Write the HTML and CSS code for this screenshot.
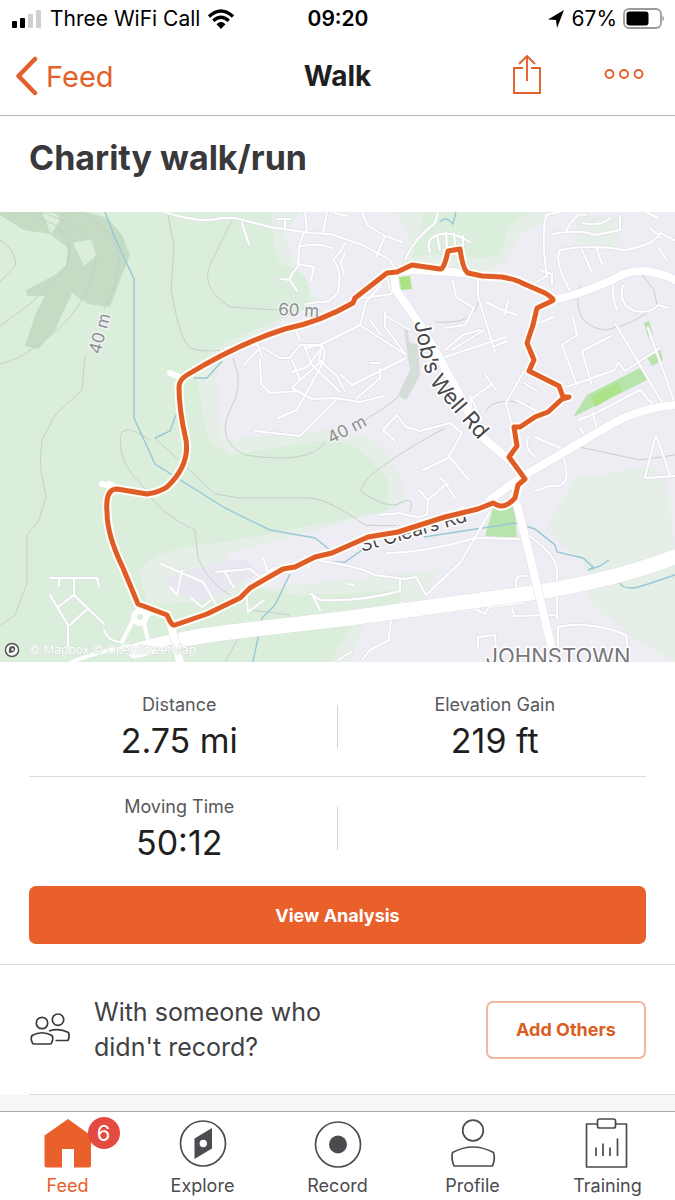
FILE: index.html
```html
<!DOCTYPE html>
<html lang="en">
<head>
<meta charset="utf-8">
<meta name="viewport" content="width=device-width, initial-scale=1">
<title>Walk</title>
<link rel="stylesheet" href="styles.css">
</head>
<body>
<div class="app">
  <div class="status">
    <div class="status-left">
      <svg width="32" height="20" viewBox="0 0 32 20"><rect x="1" y="12" width="5" height="7" rx="1"/><rect x="9" y="9" width="5" height="10" rx="1"/><rect x="17" y="5" width="5" height="14" rx="1" fill="#d0d0d2"/><rect x="25" y="1" width="5" height="18" rx="1" fill="#d0d0d2"/></svg>
      <span>Three WiFi Call</span>
      <svg width="28" height="20" viewBox="0 0 28 20" fill="none" stroke="#000" stroke-width="3.4"><path d="M2 7.500Q14-3.500 26 7.500M6.300 11.800Q14 4.800 21.700 11.800"/><path d="M9.500 15.200Q14 11 18.500 15.200L14 20Z" fill="#000" stroke="none"/></svg>
    </div>
    <strong class="clock">09:20</strong>
    <div class="status-right">
      <svg width="18" height="20" viewBox="0 0 18 20"><path d="M17 1L1 10.500L9 11L10 19Z"/></svg>
      <span class="battery-text">67%</span>
      <svg width="42" height="22" viewBox="0 0 42 22"><rect x="1" y="1" width="37" height="19" rx="5" fill="none" stroke="#9b9b9d" stroke-width="1.800"/><rect x="3.500" y="3.500" width="22" height="14" rx="3"/><path d="M39.500 7.500Q42.500 10.500 39.500 13.500Z" fill="#9b9b9d"/></svg>
    </div>
  </div>

  <header class="nav">
    <a class="back" href="#feed">
      <svg width="24" height="40" viewBox="0 0 24 40" fill="none" stroke="currentColor" stroke-width="4.500" stroke-linecap="round" stroke-linejoin="round"><path d="M20 3L3.500 20L20 37"/></svg>
      <span>Feed</span>
    </a>
    <h1>Walk</h1>
    <div class="nav-actions">
      <button type="button" aria-label="Share"><svg width="30" height="42" viewBox="0 2 30 42" fill="none" stroke="currentColor" stroke-width="1.900"><path d="M11 15H2V40H28V15H19M15 28V3M7 11L15 3L23 11"/></svg></button>
      <button type="button" aria-label="More"><svg width="40" height="14" viewBox="0 0 40 14" fill="none" stroke="currentColor" stroke-width="1.900"><circle cx="5.500" cy="5" r="4"/><circle cx="20" cy="5" r="4"/><circle cx="34.500" cy="5" r="4"/></svg></button>
    </div>
  </header>

  <main>
    <h2 class="title">Charity walk/run</h2>

    <svg class="map" viewBox="0 212 675 450" role="img" aria-label="Route map">
      <defs>
        <path id="minor" d="M165 212Q200 224 222 218L235 218 270 227 310 233 330 234 365 246 390 260 397 272M242 223L249 244M285 219V228M278 219H290M305 212L307 231M327 212L323 233M335 213L347 216M362 212L368 226 385 236 402 242M385 236L376 257M345 243Q338 256 333 260Q343 271 338 292Q330 304 318 302L306 304M299 247L304 232M333 248Q315 242 299 247L298 264 314 267 311 281M298 266Q290 276 290 280L281 279M290 280L297 291M345 252L341 262 344 275M438 212L435 223Q413 240 405 260M547 276Q541 240 546 215L560 212M552 234Q580 229 595 235L620 230 620 216M566 232Q575 212 585 215M583 223Q600 227 610 218M646 212L658 218M570 291Q554 262 560 250Q590 244 625 250Q655 245 660 233L675 240M650 228L662 238M582 250L592 272M596 247L602 264M547 276L533 284M540 270L552 274V284M659 248L667 261M614 281Q610 292 617 310M623 285Q618 305 635 311Q651 314 658 305L668 308M615 323L663 404M648 328L675 404M573 317L577 335 562 345 577 385M611 336L582 351 592 386M566 387L615 370 618 362 625 371 660 348M578 420L592 415 640 390 655 407M592 412L597 428M580 428L588 440M524 371L506 403 512 425M524 383L537 391M516 400L540 413M554 317L533 325M453 281L456 297 474 308 465 325 445 328M478 275V296L495 352M486 302L500 309 517 315M508 300L505 315M495 346L507 341M445 357L506 337M445 350L463 335 480 330M452 350L484 330M387 278L392 294 363 298M375 279L381 285 366 302 360 325M370 320L381 335M385 312V327L406 355 360 325 318 346M386 316L410 330M296 331L300 340M225 348L258 345 262 357M262 347L280 358 290 358 300 345 322 345 319 360 337 376 345 391M258 350L244 365M260 359L261 384 270 393 299 391M292 360L300 380 292 388 312 399 335 398 360 402 384 396M323 362L308 390 297 410 278 418M320 350L307 367 292 372M380 369L380 378 356 399M370 363H380M304 345L312 365 340 392M307 348Q330 340 323 360L300 380M340 374L352 385 406 358M338 398L300 436 255 431M383 430L397 415 406 427 420 431 450 423 462 433M383 430L395 441M474 421L470 400 492 384M485 374L496 390M470 396L482 420M462 433L448 458 423 470M448 455L469 480M310 569L304 555M320 561Q358 566 375 575L405 579 416 577 426 595 460 563 490 512M311 594L320 600Q360 602 400 591V580M312 594L320 610M347 584L353 585M355 551L360 536M387 553Q430 552 475 538L520 539M379 515L400 513Q420 520 427 514L428 500 446 484 455 498M419 490L428 500M440 478L448 485M216 572L250 569 260 577 275 567M263 558L267 570M225 572L234 588M161 564L203 582 217 606M182 570L177 595 170 587M191 598L202 607 211 600M246 588L248 612 264 600M524 532Q557 555 557 570V618M527 576Q512 573 517 588M463 603L485 614 489 607 523 603M512 607L514 616 555 615M558 650V627Q590 620 626 635L628 652M478 647V637L495 635 496 648M528 437Q524 450 536 457M535 437L560 448Q577 490 550 486L535 491M645 477L656 435 670 475M646 478L675 476M50 578H97L99 587M59 578V586M74 578V595L58 607M50 595L68 625V650M74 595L104 624M88 608L70 625M104 630Q108 642 123 642M402 602Q390 609 389 640L370 650 362 660M409 615L450 610M351 652L338 660M430 252Q425 240 437 235Q450 230 470 242M437 235L440 250M446 232L447 248M454 233L455 246M463 236L463 249"/>
        <path id="medium" d="M122 642L133 620M143 620L148 640 160 644M145 617Q152 610 167 615M72 662Q95 652 130 646"/>
        <path id="major" d="M552 300Q580 295 612 280Q640 262 675 280M394 276L396 290 418 322Q445 365 480 435L516 466M490 500L520 478L610 425Q640 408 675 405M466 273L412 270 397 272"/>
        <path id="highway" d="M135 651Q180 638 230 632L350 618 510 596Q600 585 675 557"/>
        <path id="route" d="M175 625Q172 627 167 615L138 604 123 568Q107 535 107 512Q105 489 117 489L147 494Q160 492 167 487Q190 465 186 440Q179 410 179 387Q179 380 187 375Q240 343 285 329Q320 322 353 303L355 298 387 273 397 272 412 265 440 269Q444 270 448 251L460 249Q463 270 468 273L482 276 502 277Q518 280 522 283L545 293Q556 300 552 301L537 308 533 325 527 343 534 360 529 371 559 386 563 397H569L562 399 548 412 535 417 520 427H514L517 446 509 457 525 479 518 485 515 498Q505 509 497 505L493 503 478 509 445 517 398 532 368 537 332 553 315 557 295 567 283 569 250 588 240 598 207 614Z"/>
        <path id="jobsPath" d="M414 322L421 356Q426 378 437 392L490 453"/>
        <path id="clearsPath" d="M362 552L400 541 490 515"/>
      </defs>
      <rect class="land" y="212" width="675" height="450"/>
      <path class="park-light" d="M0 212H300L285 235Q298 280 320 300L230 350 217 375 222 440 325 430Q400 430 405 505L225 555 250 590 440 570 425 603 365 622 350 662H0Z"/>
      <path class="park" d="M0 212H272Q272 260 285 266Q315 270 308 307L225 343 187 372 197 378 208 440 230 455 325 440Q360 440 388 480L388 511Q290 530 225 542Q155 547 140 570Q140 588 150 604L225 600 250 586 300 596 400 590 401 602 352 624 330 662H0Z"/>
      <path class="built" d="M160 580L215 562 245 560 260 572 225 592 195 602Z"/>
      <path class="park-light" d="M395 212H550L545 222 520 235 505 262 485 274 460 270 400 265 410 240Z"/>
      <path class="park" d="M425 212H530L510 225 500 255 482 258 430 255 412 258Z"/>
      <path class="park-light" d="M575 478L650 467 667 480 675 548 595 580 580 560 545 530Z"/>
      <path class="park-light" d="M585 582L675 565V662L635 640 590 602ZM577 215L625 218 615 248 575 242Z"/>
      <path class="wood" d="M0 212H85L108 218 122 235 130 255 120 280 110 307 88 304 72 293 55 330 38 349 25 346 36 313 45 296 27 296 26 290 55 275 66 265 68 248 50 234 24 230 0 215Z"/>
      <path class="park" d="M42 212Q60 212 60 220L51 234 46 222ZM73 243L92 239 97 255 84 266 78 253Z"/>
      <path class="contour" d="M0 240Q14 247 16 265L0 282M25 212L55 225Q78 245 65 270L30 304 0 326M42 212Q110 235 93 270Q85 310 45 340Q20 360 0 364M82 212Q120 235 119 262Q117 290 104 309M85 356L82 390 55 415 42 440 40 465 46 497 39 520 27 535 27 583 15 615 0 625M168 215L174 245 171 290Q180 340 190 348Q205 353 220 350M233 218L210 265Q200 288 230 307L278 310M233 358Q245 385 230 410Q215 440 245 455Q310 465 325 442M150 440Q120 420 120 440Q120 465 142 485Q160 515 195 530L198 558Q210 585 230 595M155 438L215 494 240 498 310 498Q330 500 365 525L400 526M365 420Q390 405 400 395M445 428Q350 480 363 493Q390 510 400 503Q415 495 410 512M580 285Q570 325 605 330Q635 325 657 305L654 290 640 272M435 322Q475 325 478 302M485 412Q495 395 530 405M570 445L640 460 675 455M225 662L240 635M250 610L290 615"/>
      <path class="steel" d="M404 329L408 330 409 342 418 345 420 375 412 390 406 400 398 395 410 370Z"/>
      <path class="lawn" d="M644 323L649 321 653 335 648 337ZM646 356L660 348 663 360 652 366ZM573 417L587 395 640 368 647 380Z"/>
      <path class="lawn-bright" d="M399 277L410 276 412 289 401 290ZM592 396L618 382 622 391 595 407Z"/>
      <path class="lawn" d="M493 508L514 503 517 538 485 536Z"/>
      <path class="water" d="M105 212L115 238 134 279V418L155 464 225 508 270 530 315 538 330 550M222 361L207 378 194 378M176 415L170 431 155 438M319 562L345 562 365 548M290 574L275 605 262 618 253 662M424 537L515 523 535 529 555 545 557 552 583 558 593 567 588 570 600 566 609 560M620 583Q625 592 645 585L675 575M440 222Q445 215 453 224L456 212"/>
      <use href="#minor" class="minor-edge"/><use href="#minor" class="minor-line"/>
      <circle cx="140" cy="617" r="6" class="roundabout"/>
      <use href="#medium" class="medium-line"/>
      <use href="#major" class="major-edge"/><use href="#major" class="major-line"/>
      <use href="#highway" class="highway-edge"/><use href="#highway" class="highway-line"/>
      <path class="major-edge" d="M517 505L526 540 551 645M171 625L180 662"/><path class="major-line" d="M517 505L526 540 551 645M171 625L180 662"/>
      <path class="spur" d="M102 484L115 487M170 373L182 378M109 484L115 487"/>
      <text class="road-label"><textPath href="#jobsPath">Job’s Well Rd</textPath></text>
      <text class="road-label small"><textPath href="#clearsPath">St Clears Rd</textPath></text>
      <use href="#route" class="route-road"/>
      <g class="contour-label">
        <text transform="translate(100 355) rotate(-75)">40 m</text>
        <text x="278" y="315" transform="rotate(3 278 315)">60 m</text>
        <text transform="translate(331 444) rotate(-27)">40 m</text>
      </g>
      <text class="town" x="558" y="664">JOHNSTOWN</text>
      <use href="#route" class="route-line"/>
      <circle cx="12" cy="650" r="6.500" fill="#fff" stroke="#555" stroke-width="1.500"/><path d="M9 653Q8 646 12 646Q16 646 15 650Q14 653 9 653Z" fill="#555"/><circle cx="12.500" cy="649.500" r="1.200" fill="#fff"/>
      <text class="credit" x="29" y="654">© Mapbox © OpenStreetMap</text>
    </svg>

    <dl class="stats">
      <div class="stat"><dt>Distance</dt><dd>2.75 mi</dd></div>
      <div class="stat"><dt>Elevation Gain</dt><dd>219 ft</dd></div>
      <div class="stat"><dt>Moving Time</dt><dd>50:12</dd></div>
    </dl>
    <div class="analysis"><button type="button" class="primary">View Analysis</button></div>

    <section class="others">
      <svg width="42" height="34" viewBox="0 0 42 34" fill="none" stroke="#3b3b3e" stroke-width="1.700" stroke-linejoin="round"><circle cx="13" cy="10" r="5.700"/><circle cx="29" cy="6.700" r="5.700"/><path d="M5 31Q3.500 31 3 29Q1.500 25 3 22.500Q13 17 23 22.500Q24.500 25 23 29Q22.500 31 21 31ZM20 18Q30 14.500 39.500 19.500Q41 23 39 27.500H26.500"/></svg>
      <p>With someone who didn't record?</p>
      <button type="button" class="outline">Add Others</button>
    </section>
  </main>

  <nav class="tabs">
    <a class="tab active" href="#feed">
      <span class="icon"><svg width="48" height="50" viewBox="0 0 48 50"><path fill="currentColor" d="M24 1L47 17.500V47.500Q47 49.500 45 49.500H30V31H18V49.500H2.500Q.5 49.500 .5 47.500V17.500Z"/></svg><span class="badge">6</span></span>
      <span>Feed</span>
    </a>
    <a class="tab" href="#explore">
      <span class="icon"><svg width="48" height="50" viewBox="0 0 48 50"><circle cx="24" cy="25.500" r="22.500" fill="none" stroke="currentColor" stroke-width="1.700"/><path fill="currentColor" d="M15.500 20.500L33 10V30.500L15.500 41Z"/><circle cx="24.300" cy="25.500" r="3.700" fill="#fff"/></svg></span>
      <span>Explore</span>
    </a>
    <a class="tab" href="#record">
      <span class="icon"><svg width="48" height="54" viewBox="0 0 48 54"><circle cx="24" cy="30.500" r="22.500" fill="none" stroke="currentColor" stroke-width="1.700"/><circle cx="24" cy="30.500" r="9" fill="currentColor"/></svg></span>
      <span>Record</span>
    </a>
    <a class="tab" href="#profile">
      <span class="icon"><svg width="48" height="50" viewBox="0 0 48 50" fill="none" stroke="currentColor" stroke-width="1.700" stroke-linejoin="round"><circle cx="24" cy="12.500" r="10.300"/><path d="M5 48Q2 41 3.500 34.500Q24 23.500 44.500 34.500Q46.500 41 43.500 48Z"/></svg></span>
      <span>Profile</span>
    </a>
    <a class="tab" href="#training">
      <span class="icon"><svg width="48" height="50" viewBox="0 0 48 50" fill="none" stroke="currentColor" stroke-width="1.700" stroke-linejoin="round"><path d="M13 6H2.500V49H42.500V6H31.500"/><rect x="13.500" y="1" width="18" height="9" rx="2"/><path d="M12 29.500V38M19 25.500V38M26 29.500V38M33.500 20.500V38"/></svg></span>
      <span>Training</span>
    </a>
  </nav>
</div>
</body>
</html>
```
FILE: styles.css
```css
* { box-sizing: border-box; }
body { margin: 0; background: #fff; color: #1f1f22; font-family: Inter, "Liberation Sans", sans-serif; }
button { font: inherit; color: inherit; border: 0; padding: 0; background: none; cursor: pointer; }
a { color: inherit; text-decoration: none; }
h1, h2, p, dl, dd { margin: 0; }
svg { display: block; flex: none; }

.app { display: flex; flex-direction: column; min-height: 100vh; }
main { flex: 1; background: linear-gradient(#f6f6f6, #f6f6f6) bottom / 100% 16px no-repeat; }

.status { display: grid; grid-template-columns: 1fr auto 1fr; align-items: center; height: 37px; padding: 0 10px 0 11px; font-size: 21px; color: #000; }
.status-left, .status-right { display: flex; align-items: center; gap: 7px; white-space: nowrap; }
.status-right { justify-content: flex-end; gap: 6px; }
.clock { font-weight: 600; }

.nav { display: grid; grid-template-columns: 1fr auto 1fr; align-items: center; height: 79px; padding: 0 31px 0 15px; border-bottom: 1px solid #b5b5b7; }
.back { display: flex; align-items: center; gap: 7px; color: #e4602a; font-size: 29px; }
.nav h1 { font-size: 28px; line-height: 36px; font-weight: 700; padding-left: 16px; }
.nav-actions { display: flex; align-items: center; justify-content: flex-end; gap: 62px; color: #e4602a; }

.title { padding: 18px 29px 30px; font-size: 34px; line-height: 48px; font-weight: 700; color: #39393b; }

.map { width: 100%; height: auto; }
.land { fill: #eeedf4; }
.built { fill: #e9e8f0; }
.park { fill: #daeedb; }
.park-light { fill: #e5efe7; }
.wood { fill: #c5dbc4; }
.steel { fill: #d4ddd8; }
.lawn { fill: #b6e4ac; }
.lawn-bright { fill: #aae486; }
.contour { fill: none; stroke: #c6cfc8; stroke-width: 1; }
.water { fill: none; stroke: #98c8d5; stroke-width: 1.4; }
.minor-edge, .minor-line, .medium-line, .major-edge, .major-line, .highway-edge, .highway-line, .spur, .route-road, .route-line { fill: none; stroke-linecap: round; stroke-linejoin: round; }
.minor-edge { stroke: #e0e0e7; stroke-width: 3.4; }
.minor-line { stroke: #fff; stroke-width: 2; }
.medium-line { stroke: #fff; stroke-width: 4; }
.major-edge { stroke: #dfdfe6; stroke-width: 9; }
.major-line { stroke: #fff; stroke-width: 8; }
.highway-edge { stroke: #dde3e0; stroke-width: 16; }
.highway-line { stroke: #fff; stroke-width: 15; }
.roundabout { fill: #daeedb; stroke: #fff; stroke-width: 6; }
.spur { stroke: #fff; stroke-width: 6; }
.route-road { stroke: #fffdf6; stroke-width: 9; }
.route-line { stroke: #e05c26; stroke-width: 5; }
.contour-label { font-size: 17px; fill: #8c8f91; stroke: #f0f2f2; stroke-width: 3; paint-order: stroke; }
.road-label { font-size: 22px; fill: #48484b; stroke: #fff; stroke-width: 3; paint-order: stroke; }
.road-label.small { font-size: 19px; }
.town { font-size: 22px; fill: #77777b; stroke: #fff; stroke-width: 3; paint-order: stroke; text-anchor: middle; }
.credit { font-size: 12px; fill: #fff; stroke: #cfdcd2; stroke-width: 1; paint-order: stroke; }

.stats { display: grid; grid-template-columns: 1fr 1fr; margin: 0 29px; }
.stat { position: relative; height: 101px; padding: 18px 0 0; text-align: center; }
.stat:nth-child(1), .stat:nth-child(3) { padding-right: 8px; }
.stat:nth-child(2) { padding-left: 6px; }
.stat:nth-child(-n+2) { height: 115px; padding-top: 31px; border-bottom: 1px solid #dcdcde; }
.stat:nth-child(odd)::after { content: ""; position: absolute; right: 0; bottom: 28px; width: 1px; height: 43px; background: #d3d3d6; }
.stat dt { font-size: 18px; line-height: 24px; color: #58585b; }
.stat dd { font-size: 34px; line-height: 48px; }

.analysis { padding: 8px 29px 20px; border-bottom: 1px solid #dcdcde; }
.primary { display: block; width: 100%; height: 58px; border-radius: 7px; background: #e9602b; color: #fff; font-size: 18px; font-weight: 700; }

.others { display: flex; align-items: center; margin-left: 29px; padding-right: 29px; height: 130px; border-bottom: 1px solid #dcdcde; background: #fff; }
.others p { flex: 1; max-width: 260px; margin: 0 auto 0 23px; font-size: 25px; line-height: 35px; color: #414144; }
.outline { width: 160px; height: 58px; border: 2px solid #efb79c; border-radius: 7px; color: #da5d24; font-size: 18px; font-weight: 700; }

.tabs { display: grid; grid-template-columns: repeat(5, 1fr); height: 89px; border-top: 1px solid #a8a8aa; background: #fff; color: #4b4b50; }
.tab { display: flex; flex-direction: column; align-items: center; justify-content: flex-end; gap: 5px; padding-bottom: 1px; font-size: 18px; line-height: 26px; }
.tab.active { color: #e9602b; }
.icon { position: relative; }
.badge { position: absolute; left: 44px; top: -1px; width: 32px; height: 32px; border-radius: 50%; background: #e44a3f; color: #fff; font-size: 22px; line-height: 32px; text-align: center; }
```
